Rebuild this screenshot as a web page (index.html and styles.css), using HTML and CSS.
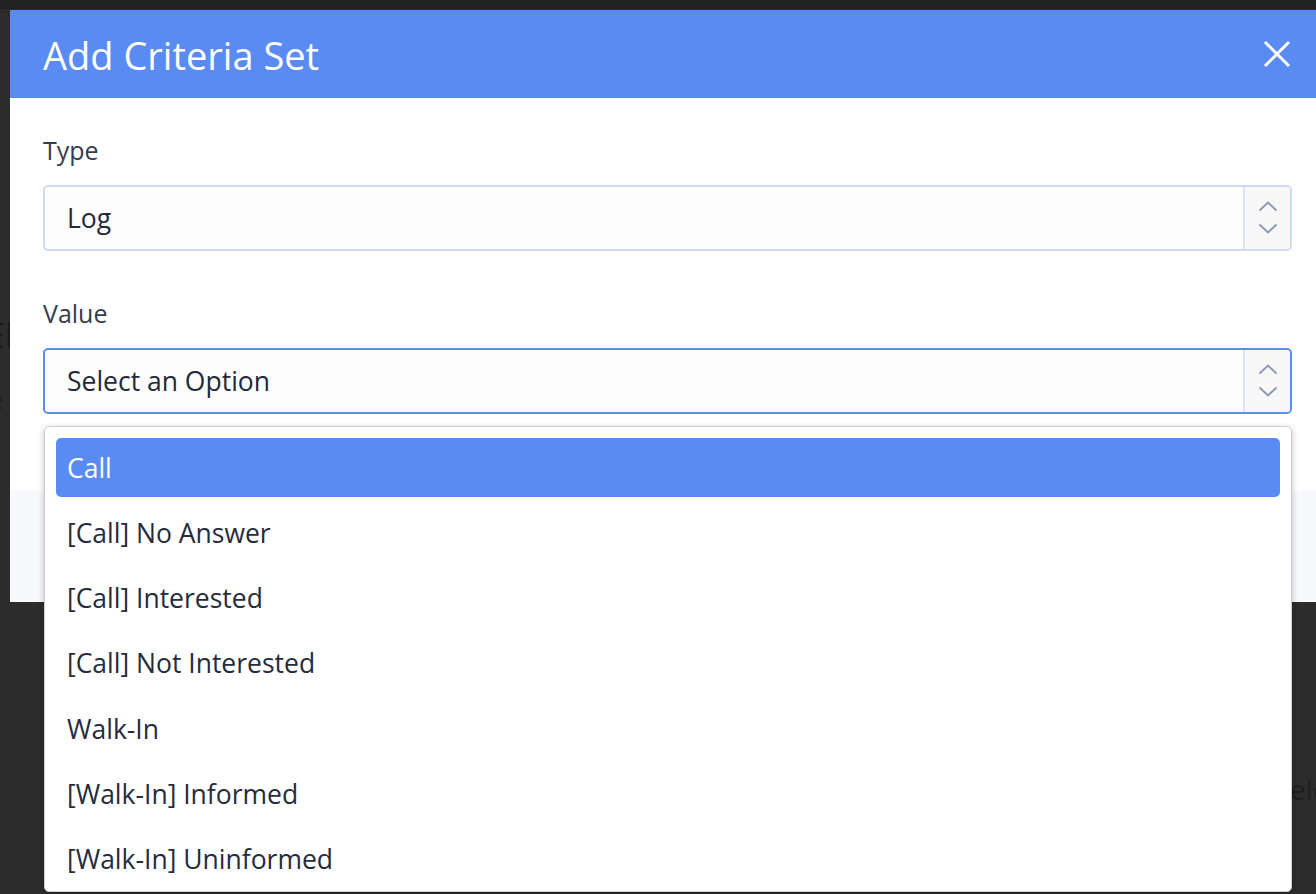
FILE: index.html
```html
<!DOCTYPE html>
<html lang="en">
<head>
<meta charset="utf-8">
<title>Add Criteria Set</title>
<link rel="stylesheet" href="styles.css">
</head>
<body>
<div class="page">
  <div class="page-top"></div>
  <div class="page-frag frag-a">El</div>
  <div class="page-frag frag-b">e</div>
  <div class="page-frag frag-c">elo</div>
</div>

<div class="modal">
  <div class="modal-header">
    <h1 class="modal-title">Add Criteria Set</h1>
    <button class="close" aria-label="Close">
      <svg width="28" height="28" viewBox="0 0 28 28"><path d="M2 2L26 26M26 2L2 26" stroke="#fff" stroke-width="3" fill="none"/></svg>
    </button>
  </div>
  <div class="modal-body">
    <div class="field">
      <div class="label">Type</div>
      <div class="select">
        <span class="select-value">Log</span>
        <span class="select-arrows">
          <svg width="20" height="34" viewBox="0 0 20 34"><path d="M1.5 9.5L10 1.5L18.5 9.5" stroke="#8c9bb5" stroke-width="2" fill="none"/><path d="M1.5 23.5L10 31.5L18.5 23.5" stroke="#8c9bb5" stroke-width="2" fill="none"/></svg>
        </span>
      </div>
    </div>
    <div class="field">
      <div class="label">Value</div>
      <div class="select focused">
        <span class="select-value">Select an Option</span>
        <span class="select-arrows">
          <svg width="20" height="34" viewBox="0 0 20 34"><path d="M1.5 9.5L10 1.5L18.5 9.5" stroke="#8c9bb5" stroke-width="2" fill="none"/><path d="M1.5 23.5L10 31.5L18.5 23.5" stroke="#8c9bb5" stroke-width="2" fill="none"/></svg>
        </span>
      </div>
    </div>
  </div>
  <div class="modal-footer"></div>

  <ul class="dropdown">
    <li class="option active">Call</li>
    <li class="option">[Call] No Answer</li>
    <li class="option">[Call] Interested</li>
    <li class="option">[Call] Not Interested</li>
    <li class="option">Walk-In</li>
    <li class="option">[Walk-In] Informed</li>
    <li class="option">[Walk-In] Uninformed</li>
  </ul>
</div>
</body>
</html>
```

FILE: styles.css
```css
html, body {
  margin: 0;
  padding: 0;
}
body {
  width: 1316px;
  height: 894px;
  overflow: hidden;
  background: #2c2c2c;
  font-family: "Open Sans", "Noto Sans", sans-serif;
  position: relative;
}
.page {
  position: absolute;
  inset: 0;
}
.page-top {
  height: 9px;
  background: #212121;
}
.page-frag {
  position: absolute;
  color: #1b1b1b;
  font-size: 28px;
}
.frag-a { left: -14px; top: 312px; font-size: 34px; }
.frag-b { left: -12px; top: 380px; color: #222; }
.frag-c { left: 1290px; top: 770px; color: #1e1e1e; }

.modal {
  position: absolute;
  top: 10px;
  left: 10px;
  width: 1320px;
  background: #fff;
  display: flex;
  flex-direction: column;
}
.modal-header {
  height: 88px;
  background: #598bf3;
  display: flex;
  align-items: center;
  justify-content: space-between;
  padding: 0 39px 0 33px;
  box-sizing: border-box;
}
.modal-title {
  margin: 0;
  color: #fff;
  font-size: 38px;
  font-weight: 400;
  line-height: 50px;
  position: relative;
  top: 1px;
}
.close {
  background: none;
  border: 0;
  padding: 0;
  width: 28px;
  height: 28px;
  display: flex;
}
.modal-body {
  padding: 35px 24px 12px 33px;
  height: 392px;
  box-sizing: border-box;
}
.field {
  margin-bottom: 45px;
}
.label {
  font-size: 25px;
  line-height: 34px;
  color: #363d4b;
  margin-bottom: 18px;
}
.select {
  height: 66px;
  width: 1249px;
  box-sizing: border-box;
  border: 2px solid #cddcf1;
  border-radius: 5px;
  background: #fdfdfd;
  display: flex;
  align-items: stretch;
  overflow: hidden;
}
.select.focused {
  border-color: #5a8cf2;
}
.select-value {
  flex: 1;
  display: flex;
  align-items: center;
  padding-left: 22px;
  font-size: 26.5px;
  color: #222a3a;
}
.select-arrows {
  width: 45px;
  background: #f7f7f8;
  border-left: 2px solid #dbe4f2;
  display: flex;
  align-items: center;
  justify-content: center;
}
.modal-footer {
  height: 112px;
  background: #f8f9fd;
}
.dropdown {
  position: absolute;
  left: 34px;
  top: 416px;
  width: 1248px;
  height: 466px;
  box-sizing: border-box;
  margin: 0;
  padding: 11px 11px 0;
  list-style: none;
  background: #fff;
  border: 1px solid #cfcfcf;
  border-radius: 5px;
  box-shadow: 0 2px 6px rgba(0, 0, 0, 0.25);
  overflow: hidden;
}
.option {
  height: 59px;
  margin-bottom: 6.3px;
  display: flex;
  align-items: center;
  padding-left: 11px;
  font-size: 26.5px;
  color: #252c3c;
  border-radius: 5px;
}
.option.active {
  background: #598bf3;
  color: #fff;
}
```
